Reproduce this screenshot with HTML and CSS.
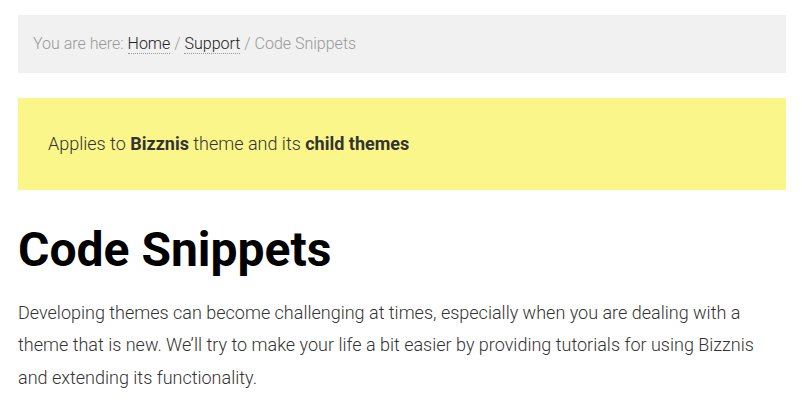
FILE: index.html
```html
<!DOCTYPE html>
<html lang="en">
<head>
  <meta charset="UTF-8" />
  <title>Code Snippets</title>
  <link rel="stylesheet" href="styles.css">
</head>
<body>
  <div class="page">
    <div class="breadcrumb">
      You are here: <a href="#">Home</a> / <a href="#">Support</a> / Code Snippets
    </div>

    <div class="notice">
      Applies to <strong>Bizznis</strong> theme and its <strong>child themes</strong>
    </div>

    <h1>Code Snippets</h1>
    <p class="intro">Developing themes can become challenging at times, especially when you are dealing with a theme that is new. We’ll try to make your life a bit easier by providing tutorials for using Bizznis and extending its functionality.</p>
  </div>
</body>
</html>
```

FILE: styles.css
```css
:root {
  --text-color: #333333;
  --muted-color: #999999;
  --crumb-bg: #f1f1f1;
  --notice-bg: #fbf68a;
}

body {
  margin: 0;
  background-color: #ffffff;
  color: var(--text-color);
  font-family: Roboto, "Liberation Sans", sans-serif;
  font-weight: 300;
}

.page {
  width: 768px;
  padding: 15px 18px 0;
}

.breadcrumb {
  background-color: var(--crumb-bg);
  color: var(--muted-color);
  font-size: 16px;
  line-height: 20px;
  padding: 19px 15px;
}

.breadcrumb a {
  color: #222222;
  text-decoration: none;
  border-bottom: 1px dotted #999999;
}

.notice {
  margin-top: 25px;
  background-color: var(--notice-bg);
  font-size: 18px;
  line-height: 32px;
  padding: 30px;
}

.notice strong {
  font-weight: 700;
}

h1 {
  margin: 32px 0 0;
  color: #000000;
  font-size: 48px;
  font-weight: 700;
  line-height: 56px;
}

.intro {
  margin: 19px 0 0;
  font-size: 18px;
  line-height: 32.4px;
}
```
